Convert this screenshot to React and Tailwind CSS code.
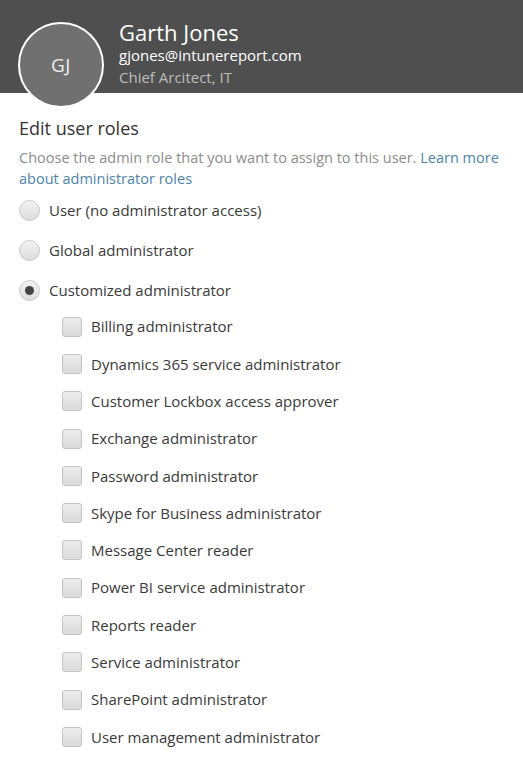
import React from 'react';

const roles = [
  'Billing administrator',
  'Dynamics 365 service administrator',
  'Customer Lockbox access approver',
  'Exchange administrator',
  'Password administrator',
  'Skype for Business administrator',
  'Message Center reader',
  'Power BI service administrator',
  'Reports reader',
  'Service administrator',
  'SharePoint administrator',
  'User management administrator',
];

const Radio = ({ label, checked }) => (
  <div className="flex items-center h-[40px]">
    <span className="w-[21px] h-[21px] rounded-full border border-[#c8c8c8] bg-gradient-to-b from-[#f2f2f2] to-[#dcdcdc] flex items-center justify-center shrink-0">
      {checked && <span className="w-[9px] h-[9px] rounded-full bg-[#444]" />}
    </span>
    <span className="ml-[9px] text-[15px] text-[#3a3a3a]">{label}</span>
  </div>
);

const Check = ({ label }) => (
  <div className="flex items-center h-[37.3px]">
    <span className="w-[20px] h-[20px] rounded-[3px] border border-[#c4c4c4] bg-gradient-to-b from-[#ececec] to-[#dadada] shrink-0" />
    <span className="ml-[9px] text-[15px] text-[#3a3a3a]">{label}</span>
  </div>
);

export default function App() {
  return (
    <div className="w-[523px] h-[768px] bg-white overflow-hidden font-['Open_Sans',sans-serif]">
      <header className="relative z-10 h-[93px] bg-[#4f4f4f] flex items-start pl-[18px] overflow-visible">
        <div className="mt-[22px] w-[86px] h-[86px] rounded-full bg-[#707070] border-2 border-white flex items-center justify-center shrink-0">
          <span className="text-[19px] text-[#eeeeee] tracking-wide">GJ</span>
        </div>
        <div className="ml-[15px] pt-[18px] flex flex-col">
          <span className="text-[22px] leading-[28px] text-white">Garth Jones</span>
          <span className="text-[15px] leading-[19px] text-white">gjones@intunereport.com</span>
          <span className="text-[15px] leading-[24px] text-[#bdbdbd]">Chief Arcitect, IT</span>
        </div>
      </header>

      <section className="px-[19px] pt-[22px]">
        <h2 className="text-[18px] leading-[26px] text-[#333]">Edit user roles</h2>
        <p className="mt-[6px] text-[14.5px] leading-[21px] text-[#8c8c8c]">
          Choose the admin role that you want to assign to this user.{' '}
          <a href="#roles" className="text-[#4e84a8]">Learn more about administrator roles</a>
        </p>
        <div className="mt-[1px]">
          <Radio label="User (no administrator access)" />
          <Radio label="Global administrator" />
          <Radio label="Customized administrator" checked />
        </div>
        <div className="pl-[43px] mt-[-2px]">
          {roles.map((r) => (
            <Check key={r} label={r} />
          ))}
        </div>
      </section>
    </div>
  );
}
